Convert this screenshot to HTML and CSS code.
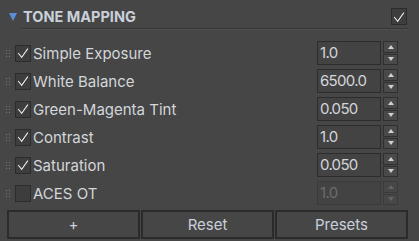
FILE: index.html
```html
<!DOCTYPE html>
<html lang="en">
<head>
  <meta charset="UTF-8" />
  <title>Tone Mapping</title>
  <link rel="stylesheet" href="styles.css">
</head>
<body>
  <div class="panel">
    <div class="header">
      <span class="fold"></span>
      <span class="title">TONE MAPPING</span>
      <span class="check big on"><svg viewBox="0 0 16 16"><polyline points="2.5,8 6.5,13 13.5,3"/></svg></span>
    </div>
    <div class="sep"></div>

    <div class="rows">
      <div class="row">
        <svg class="grip" viewBox="0 0 4 7"><rect x="0" y="0" width="1" height="1"/><rect x="3" y="0" width="1" height="1"/><rect x="0" y="3" width="1" height="1"/><rect x="3" y="3" width="1" height="1"/><rect x="0" y="6" width="1" height="1"/><rect x="3" y="6" width="1" height="1"/></svg>
        <span class="check on"><svg viewBox="0 0 16 16"><polyline points="2.5,8 6.5,13 13.5,3"/></svg></span>
        <span class="label">Simple Exposure</span>
        <span class="num">1.0</span>
        <span class="spin"><i class="up"></i><i class="down"></i></span>
      </div>
      <div class="row">
        <svg class="grip" viewBox="0 0 4 7"><rect x="0" y="0" width="1" height="1"/><rect x="3" y="0" width="1" height="1"/><rect x="0" y="3" width="1" height="1"/><rect x="3" y="3" width="1" height="1"/><rect x="0" y="6" width="1" height="1"/><rect x="3" y="6" width="1" height="1"/></svg>
        <span class="check on"><svg viewBox="0 0 16 16"><polyline points="2.5,8 6.5,13 13.5,3"/></svg></span>
        <span class="label">White Balance</span>
        <span class="num">6500.0</span>
        <span class="spin"><i class="up"></i><i class="down"></i></span>
      </div>
      <div class="row">
        <svg class="grip" viewBox="0 0 4 7"><rect x="0" y="0" width="1" height="1"/><rect x="3" y="0" width="1" height="1"/><rect x="0" y="3" width="1" height="1"/><rect x="3" y="3" width="1" height="1"/><rect x="0" y="6" width="1" height="1"/><rect x="3" y="6" width="1" height="1"/></svg>
        <span class="check on"><svg viewBox="0 0 16 16"><polyline points="2.5,8 6.5,13 13.5,3"/></svg></span>
        <span class="label">Green-Magenta Tint</span>
        <span class="num">0.050</span>
        <span class="spin"><i class="up"></i><i class="down"></i></span>
      </div>
      <div class="row">
        <svg class="grip" viewBox="0 0 4 7"><rect x="0" y="0" width="1" height="1"/><rect x="3" y="0" width="1" height="1"/><rect x="0" y="3" width="1" height="1"/><rect x="3" y="3" width="1" height="1"/><rect x="0" y="6" width="1" height="1"/><rect x="3" y="6" width="1" height="1"/></svg>
        <span class="check on"><svg viewBox="0 0 16 16"><polyline points="2.5,8 6.5,13 13.5,3"/></svg></span>
        <span class="label">Contrast</span>
        <span class="num">1.0</span>
        <span class="spin"><i class="up"></i><i class="down"></i></span>
      </div>
      <div class="row">
        <svg class="grip" viewBox="0 0 4 7"><rect x="0" y="0" width="1" height="1"/><rect x="3" y="0" width="1" height="1"/><rect x="0" y="3" width="1" height="1"/><rect x="3" y="3" width="1" height="1"/><rect x="0" y="6" width="1" height="1"/><rect x="3" y="6" width="1" height="1"/></svg>
        <span class="check on"><svg viewBox="0 0 16 16"><polyline points="2.5,8 6.5,13 13.5,3"/></svg></span>
        <span class="label">Saturation</span>
        <span class="num">0.050</span>
        <span class="spin"><i class="up"></i><i class="down"></i></span>
      </div>
      <div class="row disabled">
        <svg class="grip" viewBox="0 0 4 7"><rect x="0" y="0" width="1" height="1"/><rect x="3" y="0" width="1" height="1"/><rect x="0" y="3" width="1" height="1"/><rect x="3" y="3" width="1" height="1"/><rect x="0" y="6" width="1" height="1"/><rect x="3" y="6" width="1" height="1"/></svg>
        <span class="check"></span>
        <span class="label">ACES OT</span>
        <span class="num">1.0</span>
        <span class="spin"><i class="up"></i><i class="down"></i></span>
      </div>
    </div>

    <div class="buttons">
      <button type="button">+</button>
      <button type="button">Reset</button>
      <button type="button">Presets</button>
    </div>
  </div>
</body>
</html>
```

FILE: styles.css
```css
* { box-sizing: border-box; }
body {
  margin: 0;
  background: #464646;
  font-family: Inter, "Noto Sans", sans-serif;
  font-size: 15px;
  color: #d3d6da;
}
.panel {
  width: 419px;
  height: 241px;
  padding: 8px 12px 0 0;
}
.header {
  display: flex;
  align-items: center;
  height: 17px;
}
.fold {
  width: 0;
  height: 0;
  margin: 1px 6px 0 9px;
  border-left: 4.5px solid transparent;
  border-right: 4.5px solid transparent;
  border-top: 8px solid #5a8fd8;
}
.title {
  font-weight: 700;
  font-size: 14.5px;
  color: #c9d0da;
}
.check {
  width: 16px;
  height: 17px;
  background: #3d3d3d;
  border: 1px solid #2c2c2c;
  display: flex;
  align-items: center;
  justify-content: center;
}
.check svg {
  width: 14px;
  height: 14px;
  fill: none;
  stroke: #ececec;
  stroke-width: 1.2;
}
.check.big {
  margin-left: auto;
}
.sep {
  margin: 3px 0 0 22px;
  width: 386px;
  height: 2px;
  border-top: 1px solid #363636;
  border-bottom: 1px solid #505050;
}
.rows {
  margin-top: 9px;
  display: flex;
  flex-direction: column;
}
.row {
  display: flex;
  align-items: center;
  height: 28px;
  padding-left: 6px;
}
.grip {
  width: 4px;
  height: 7px;
  margin-right: 5px;
  fill: #7a7a7a;
}
.row .check {
  margin-right: 2px;
}
.label {
  flex: 1;
}
.num {
  width: 64px;
  height: 24px;
  line-height: 22px;
  padding-left: 2px;
  border: 1px solid #2c2c2c;
  background: #434343;
  font-size: 15px;
  letter-spacing: -0.7px;
  color: #d3d6da;
}
.spin {
  width: 15px;
  height: 24px;
  margin: 0 9px 0 2px;
  display: flex;
  flex-direction: column;
  gap: 1px;
}
.spin i {
  flex: 1;
  border: 1px solid #2f2f2f;
  background: #4a4a4a;
  display: flex;
  align-items: center;
  justify-content: center;
}
.spin i::after {
  content: "";
  border-left: 3.5px solid transparent;
  border-right: 3.5px solid transparent;
}
.spin .up::after { border-bottom: 4px solid #cfcfcf; }
.spin .down::after { border-top: 4px solid #cfcfcf; }
.disabled .num {
  color: #6c6c6c;
  border-color: #3a3a3a;
}
.disabled .spin i { border-color: #3b3b3b; background: #474747; }
.disabled .spin .up::after { border-bottom-color: #656565; }
.disabled .spin .down::after { border-top-color: #656565; }
.buttons {
  margin: 3px 0 0 7px;
  width: 401px;
  display: flex;
  gap: 1px;
}
.buttons button {
  flex: 1;
  height: 29px;
  background: #464646;
  border: 2px solid #2b2b2b;
  border-radius: 0;
  font-family: inherit;
  font-size: 15px;
  color: #c9d0da;
  cursor: pointer;
}
.buttons button:hover {
  background: #4e4e4e;
}
```
